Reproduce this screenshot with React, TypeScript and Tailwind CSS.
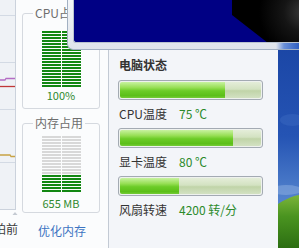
import React from "react";

function Meter({ rows, green }: { rows: number; green: number }) {
  return (
    <div className="flex flex-col gap-px w-[39px]">
      {Array.from({ length: rows }).map((_, i) => {
        const on = i >= rows - green;
        return (
          <div key={i} className="flex gap-px h-[2px]">
            <div className={on ? "flex-1 bg-[#128712]" : "flex-1 bg-[#d8d8d8]"} />
            <div className={on ? "flex-1 bg-[#128712]" : "flex-1 bg-[#d8d8d8]"} />
          </div>
        );
      })}
    </div>
  );
}

function Bar({ pct }: { pct: number }) {
  return (
    <div className="h-[20px] w-[145px] rounded-[3px] border border-[#a3aab3] p-px bg-[#eef1ee]">
      <div className="h-full w-full rounded-[2px] overflow-hidden bg-[linear-gradient(to_bottom,#e4edd9_0%,#d3e2c1_45%,#c0d4a8_55%,#d2e1c2_100%)]">
        <div
          className="h-full bg-[linear-gradient(to_bottom,#c8f2a0_0%,#97df55_35%,#6ccc27_55%,#5cbf19_85%,#74cc36_100%)]"
          style={{ width: `${pct}%` }}
        />
      </div>
    </div>
  );
}

export default function App() {
  return (
    <div className="relative w-[299px] h-[248px] overflow-hidden flex bg-[#fbfcfd] font-['Noto_Sans_CJK_SC','Noto_Sans',sans-serif]">
      {/* left section */}
      <div className="w-[108px] h-full flex">
        <div className="w-[16px] flex flex-col">
          <div className="w-[16px] h-[210px] border-r border-b border-[#cbd2dc] bg-[#eff2f6]">
            <svg width="15" height="209" className="block">
              <line x1="0" y1="15.5" x2="15" y2="15.5" stroke="#d3dae4" />
              <line x1="0" y1="62.5" x2="15" y2="62.5" stroke="#d3dae4" />
              <line x1="0" y1="109.5" x2="15" y2="109.5" stroke="#d3dae4" />
              <line x1="0" y1="162.5" x2="15" y2="162.5" stroke="#d3dae4" />
              <polyline points="0,80 5,80 6,78.5 15,78.5" fill="none" stroke="#b46cc4" strokeWidth="1.3" />
              <line x1="0" y1="86.5" x2="15" y2="86.5" stroke="#c03838" strokeWidth="1.3" />
              <polyline points="0,155 10,155 11,156.5 15,156.5" fill="none" stroke="#c8a244" strokeWidth="1.3" />
            </svg>
          </div>
          <div className="relative h-[6px]">
            <svg width="22" height="6" className="block">
              <polygon points="12.5,5 15,2 17.5,5" fill="#c4cad2" />
            </svg>
          </div>
          <div className="mt-[5px] w-[18px] overflow-hidden flex justify-end whitespace-nowrap text-[12px] leading-[16px] text-[#3c3c3c]">
            拍前
          </div>
        </div>
        <div className="ml-[6px] w-[78px] flex flex-col">
          <fieldset className="mt-[5px] h-[104px] w-[78px] border border-[#d5d9df] rounded-[3px] flex flex-col items-center">
            <legend className="ml-[10px] px-[2px] text-[12px] leading-[16px] text-[#6e6e6e]">CPU占用</legend>
            <div className="mt-[10px]">
              <Meter rows={19} green={19} />
            </div>
            <div className="mt-[1px] text-[11px] leading-[14px] text-[#2f8a2f]">100%</div>
          </fieldset>
          <fieldset className="mt-[6px] h-[98px] w-[78px] border border-[#d5d9df] rounded-[3px] flex flex-col items-center">
            <legend className="ml-[10px] px-[2px] text-[12px] leading-[16px] text-[#6e6e6e]">内存占用</legend>
            <div className="mt-[5px]">
              <Meter rows={19} green={6} />
            </div>
            <div className="mt-[4px] text-[11px] leading-[14px] text-[#2f8a2f]">655 MB</div>
          </fieldset>
          <div className="mt-[10px] pl-[16px] text-[12px] leading-[16px] text-[#3d74c2]">优化内存</div>
        </div>
      </div>

      {/* right panel */}
      <div className="w-[170px] h-full border-l border-[#c3cad4] bg-[#f3f5f9] pt-[57px] pl-[10px]">
        <div className="text-[12px] leading-[16px] font-bold text-[#333333]">电脑状态</div>
        <div className="mt-[7px] -ml-px">
          <Bar pct={74.5} />
        </div>
        <div className="mt-[6px] flex text-[12px] leading-[16px]">
          <span className="w-[60px] text-[#333333]">CPU温度</span>
          <span className="text-[#2b8a2b]">75 ℃</span>
        </div>
        <div className="mt-[6px] -ml-px">
          <Bar pct={80} />
        </div>
        <div className="mt-[6px] flex text-[12px] leading-[16px]">
          <span className="w-[60px] text-[#333333]">显卡温度</span>
          <span className="text-[#2b8a2b]">80 ℃</span>
        </div>
        <div className="mt-[6px] -ml-px">
          <Bar pct={41.5} />
        </div>
        <div className="mt-[6px] flex text-[12px] leading-[16px]">
          <span className="w-[60px] text-[#333333]">风扇转速</span>
          <span className="text-[#2b8a2b]">4200 转/分</span>
        </div>
      </div>

      {/* wallpaper */}
      <div className="w-[21px] h-full">
        <svg width="21" height="248" className="block">
          <defs>
            <linearGradient id="sky" x1="0" y1="0" x2="0" y2="1">
              <stop offset="0" stopColor="#163f9e" />
              <stop offset="0.55" stopColor="#2554b4" />
              <stop offset="0.78" stopColor="#4f7fcb" />
              <stop offset="1" stopColor="#6a94d6" />
            </linearGradient>
            <linearGradient id="hill" x1="0" y1="0" x2="0" y2="1">
              <stop offset="0" stopColor="#7cb53a" />
              <stop offset="0.4" stopColor="#4a9420" />
              <stop offset="1" stopColor="#2c6e12" />
            </linearGradient>
          </defs>
          <rect width="21" height="248" fill="url(#sky)" />
          <ellipse cx="8" cy="190" rx="16" ry="5" fill="#86a8de" opacity="0.6" />
          <ellipse cx="14" cy="120" rx="12" ry="6" fill="#3a68c0" opacity="0.5" />
          <path d="M0,204 C6,200 14,196 21,195 L21,248 L0,248 Z" fill="url(#hill)" />
        </svg>
      </div>

      {/* overlapping window */}
      <div className="absolute left-[67px] top-0 w-[232px] h-[50px] rounded-bl-[6px] border-l border-b border-[#a2b0c2] pl-[5px] pb-[6px] bg-[linear-gradient(to_right,transparent_208px,#6a90d8_216px,#2c5cbf_232px),linear-gradient(to_bottom,#f3f5f8,#dfe4eb)]">
        <div className="relative h-full w-full bg-[#000084] rounded-bl-[3px] overflow-hidden border-l border-b border-[#b9c3cf]">
          <svg width="226" height="43" className="absolute left-0 top-0">
            <defs>
              <radialGradient id="blk" cx="230" cy="12" r="45" gradientUnits="userSpaceOnUse">
                <stop offset="0" stopColor="#3a3a3a" />
                <stop offset="0.45" stopColor="#151515" />
                <stop offset="1" stopColor="#000000" />
              </radialGradient>
            </defs>
            <polygon points="158,0 226,0 226,43 194,43 158,15" fill="url(#blk)" />
          </svg>
        </div>
      </div>
    </div>
  );
}
